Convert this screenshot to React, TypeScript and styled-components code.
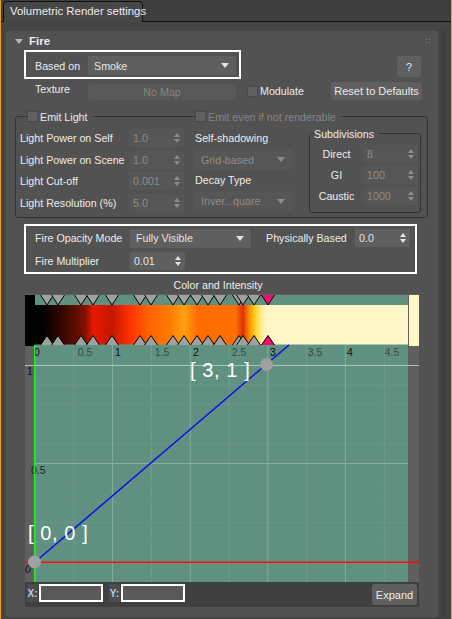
import styled, { createGlobalStyle } from 'styled-components';

const GlobalStyle = createGlobalStyle`
  html, body {
    margin: 0;
    padding: 0;
    background: #444444;
  }
  * {
    box-sizing: border-box;
  }
`;

const Page = styled.div`
  width: 452px;
  height: 619px;
  overflow: hidden;
  display: flex;
  flex-direction: column;
  background: #444444;
  border-left: 1px solid #e8a31c;
  border-right: 1px solid #e8a31c;
  font-family: "Liberation Sans", Arial, sans-serif;
  font-size: 10.7px;
  color: #ececec;
`;

const TabBar = styled.div`
  height: 22px;
  flex: none;
  padding: 1px 0 0 2px;
  display: flex;
  align-items: flex-end;
  border-bottom: 1px solid #111111;
  background: #3f3f3f;
`;

const Tab = styled.div`
  width: 140px;
  height: 21px;
  margin-bottom: -1px;
  padding: 3px 0 0 6px;
  background: #474747;
  border: 1px solid #111111;
  border-bottom: 0;
  border-radius: 4px 4px 0 0;
  font-size: 11.4px;
  white-space: nowrap;
`;

const Body = styled.div`
  flex: 1;
  display: flex;
  padding: 9px 5px 2px 5px;
  gap: 3px;
`;

const Rollout = styled.div`
  position: relative;
  width: 432px;
  height: 586px;
  background: #525252;
  border-radius: 2px;
  display: flex;
  flex-direction: column;
`;

const Scrollbar = styled.div`
  width: 5px;
  background: #3d3d3d;
`;

const RolloutHeader = styled.div`
  height: 19px;
  flex: none;
  display: flex;
  align-items: center;
  gap: 6px;
  padding: 1px 6px 0 9px;
  font-weight: 700;
  font-size: 11.5px;
`;

const Collapse = styled.span`
  width: 0;
  height: 0;
  border-left: 4px solid transparent;
  border-right: 4px solid transparent;
  border-top: 5px solid #b8b8b8;
`;

const Grip = styled.span`
  margin-left: auto;
  width: 7px;
  height: 7px;
  background-image: radial-gradient(#8a8a8a 0.7px, transparent 0.8px);
  background-size: 3px 3px;
`;

const TopRow = styled.div`
  height: 29px;
  flex: none;
  display: flex;
  align-items: flex-start;
  padding-left: 18px;
`;

const Highlight = styled.div`
  border: 2px solid #ffffff;
`;

const BasedOnBox = styled(Highlight)`
  width: 217px;
  height: 29px;
  display: flex;
  align-items: center;
  padding: 2px 3px 0 9px;
`;

const Label = styled.span`
  white-space: nowrap;
`;

const BasedOnLabel = styled(Label)`
  width: 53px;
  flex: none;
`;

const Dropdown = styled.div<{ $width: number; $height?: number; $disabled?: boolean }>`
  width: ${props => props.$width}px;
  height: ${props => props.$height ?? 19}px;
  flex: none;
  display: flex;
  align-items: center;
  justify-content: space-between;
  padding: 0 7px 0 6px;
  border-radius: 1px;
  background: ${props => (props.$disabled ? '#565656' : '#5f5f5f')};
  color: ${props => (props.$disabled ? '#8c8c8c' : '#e4e4e4')};
  white-space: nowrap;
`;

const Caret = styled.span<{ $disabled?: boolean }>`
  width: 0;
  height: 0;
  border-left: 4px solid transparent;
  border-right: 4px solid transparent;
  border-top: 5px solid ${props => (props.$disabled ? '#8c8c8c' : '#e4e4e4')};
`;

const HelpButton = styled.div`
  width: 24px;
  height: 21px;
  margin: 6px 0 0 156px;
  display: flex;
  align-items: center;
  justify-content: center;
  border-radius: 3px;
  background: #5f5f5f;
`;

const TextureRow = styled.div`
  height: 37px;
  flex: none;
  display: flex;
  align-items: flex-start;
  padding: 3px 0 0 29px;
`;

const TextureLabel = styled(Label)`
  width: 53px;
  flex: none;
  margin-top: 1px;
`;

const NoMap = styled.div`
  width: 148px;
  height: 16px;
  margin-top: 2px;
  flex: none;
  display: flex;
  align-items: center;
  justify-content: center;
  border-radius: 3px;
  background: #585858;
  color: #858585;
`;

const CheckRow = styled.div<{ $disabled?: boolean }>`
  display: flex;
  align-items: center;
  gap: 2px;
  white-space: nowrap;
  color: ${props => (props.$disabled ? '#858585' : '#ececec')};
`;

const Modulate = styled(CheckRow)`
  margin: 3px 0 0 11px;
  width: 84px;
  flex: none;
`;

const Check = styled.span`
  width: 11px;
  height: 11px;
  flex: none;
  background: #616161;
  border: 1px solid #4a4a4a;
`;

const ResetButton = styled.div`
  width: 91px;
  height: 18px;
  flex: none;
  display: flex;
  align-items: center;
  justify-content: center;
  border-radius: 3px;
  background: #5f5f5f;
  font-size: 11px;
  white-space: nowrap;
`;

const EmitGroup = styled.div`
  position: relative;
  width: 413px;
  height: 102px;
  flex: none;
  margin-left: 9px;
  padding: 10px 0 0 4px;
  display: flex;
  align-items: flex-start;
  border: 1px solid #333333;
  border-radius: 3px;
`;

const Legend = styled.div<{ $left: number }>`
  position: absolute;
  top: -7px;
  left: ${props => props.$left}px;
  padding: 0 5px 0 0;
  height: 13px;
  display: flex;
  align-items: center;
  background: #525252;
`;

const LightColumn = styled.div`
  width: 175px;
  flex: none;
  display: grid;
  grid-auto-rows: 21.7px;
`;

const LightRow = styled.div`
  display: flex;
  align-items: center;
  justify-content: space-between;
  padding-right: 11px;
`;

const Spinner = styled.div<{ $disabled?: boolean; $width?: number }>`
  width: ${props => props.$width ?? 55}px;
  height: 18px;
  flex: none;
  display: flex;
  align-items: center;
  justify-content: space-between;
  padding: 0 4px;
  border-radius: 1px;
  background: ${props => (props.$disabled ? '#565656' : '#5f5f5f')};
  color: ${props => (props.$disabled ? '#8c8c8c' : '#e4e4e4')};
`;

const Arrows = styled.span<{ $disabled?: boolean }>`
  display: flex;
  flex-direction: column;
  gap: 2px;
  &::before,
  &::after {
    content: '';
    width: 0;
    height: 0;
    border-left: 3px solid transparent;
    border-right: 3px solid transparent;
  }
  &::before {
    border-bottom: 4px solid ${props => (props.$disabled ? '#8c8c8c' : '#e4e4e4')};
  }
  &::after {
    border-top: 4px solid ${props => (props.$disabled ? '#8c8c8c' : '#e4e4e4')};
  }
`;

const ShadowColumn = styled.div`
  width: 114px;
  flex: none;
  display: flex;
  flex-direction: column;
`;

const ShadowLabel = styled(Label)`
  height: 15px;
  line-height: 15px;
  margin: 4px 0 3px;
`;

const DecayLabel = styled(ShadowLabel)`
  margin: 3px 0 3px;
`;

const SubGroup = styled.div`
  position: relative;
  width: 112px;
  height: 80px;
  flex: none;
  margin-top: 6px;
  padding: 9px 3px 0 0;
  border: 1px solid #333333;
  border-radius: 3px;
  display: grid;
  grid-auto-rows: 21px;
`;

const SubRow = styled.div`
  display: grid;
  grid-template-columns: 53px 55px;
  align-items: center;
  justify-items: center;
`;

const OpacityBox = styled(Highlight)`
  width: 393px;
  height: 50px;
  flex: none;
  margin: 6px 0 0 18px;
  padding: 3px 5px 0 9px;
  display: grid;
  grid-template-columns: 95px 121px 15px 89px 55px;
  grid-template-rows: 18px 18px;
  row-gap: 5px;
  align-items: center;
`;

const ChartTitle = styled.div`
  height: 20px;
  flex: none;
  padding: 5px 0 0 0;
  margin-left: -8px;
  text-align: center;
`;

const CurveWidget = styled.div`
  width: 394px;
  height: 313px;
  flex: none;
  margin-left: 19px;
  display: flex;
  flex-direction: column;
`;

const CurveBar = styled.div`
  height: 25px;
  flex: none;
  display: flex;
  align-items: flex-start;
  padding: 2px 2px 0 2px;
  background: #404040;
`;

const AxisTag = styled.span`
  width: 11px;
  height: 18px;
  margin-right: 1px;
  flex: none;
  display: flex;
  align-items: center;
  justify-content: center;
  background: #4c4c4c;
  font-size: 10px;
  font-weight: 700;
  color: #b4cce8;
`;

const AxisInput = styled.div`
  width: 64px;
  height: 18px;
  flex: none;
  background: #595959;
  border: 2px solid #ffffff;
`;

const AxisGap = styled.span`
  width: 6px;
  flex: none;
`;

const ExpandButton = styled.div`
  width: 45px;
  height: 21px;
  margin-left: auto;
  display: flex;
  align-items: center;
  justify-content: center;
  border-radius: 3px;
  background: #5f5f5f;
  font-size: 11px;
`;

const lightRows = [
  { label: 'Light Power on Self', value: '1.0' },
  { label: 'Light Power on Scene', value: '1.0' },
  { label: 'Light Cut-off', value: '0.001' },
  { label: 'Light Resolution (%)', value: '5.0' },
];

const subRows = [
  { label: 'Direct', value: '8' },
  { label: 'GI', value: '100' },
  { label: 'Caustic', value: '1000' },
];

const markers = [47, 58, 81, 93, 112, 140, 151, 173, 184, 197, 208, 220, 239, 243, 254];
const ticks = [
  { x: 37, label: '0', dark: true },
  { x: 85, label: '0.5' },
  { x: 118, label: '1', dark: true },
  { x: 162, label: '1.5' },
  { x: 196, label: '2', dark: true },
  { x: 239, label: '2.5' },
  { x: 273, label: '3', dark: true },
  { x: 315, label: '3.5' },
  { x: 350, label: '4', dark: true },
  { x: 392, label: '4.5' },
];

const stops: [number, string][] = [
  [43, '#000000'], [75, '#5a0c00'], [86, '#8a1000'], [93, '#e81800'], [112, '#c41800'],
  [130, '#ff3300'], [150, '#ff6400'], [170, '#ff7c00'], [184, '#ffa010'], [198, '#ff6c00'],
  [236, '#ff7000'], [243, '#dd3000'], [249, '#ff8a00'], [255, '#ffd020'], [262, '#fff0a0'],
  [268, '#fff8c6'],
];

// chart is drawn in page pixels, shifted by the widget origin (25, 294)
const OX = 25;
const OY = 294;
const chartFont = 'Liberation Sans, Arial, sans-serif';

const Marker = ({ x, fill }: { x: number; fill: string }) => {
  const cx = x - OX;
  return (
    <g>
      <polygon points={`${cx - 6.5},1 ${cx + 6.5},1 ${cx},11`} fill={fill} />
      <polyline points={`${cx - 6.5},1 ${cx},11 ${cx + 6.5},1`} fill="none" stroke="#000000" />
      <polygon points={`${cx - 6.5},51 ${cx + 6.5},51 ${cx},41.5`} fill={fill} />
      <polyline points={`${cx - 6.5},51 ${cx},41.5 ${cx + 6.5},51`} fill="none" stroke="#000000" />
    </g>
  );
};

const CurveChart = () => {
  const px = (x: number) => x - OX;
  const py = (y: number) => y - OY;
  const vertical = Array.from({ length: 10 }, (_, i) => ({ x: 35 + 38.8 * i, major: i % 2 === 0 }));
  const horizontal = Array.from({ length: 12 }, (_, i) => 345 + 19.7 * i);

  return (
    <svg width="394" height="288" viewBox="0 0 394 288" style={{ display: 'block', flex: 'none' }}>
      <defs>
        <linearGradient id="fire" gradientUnits="userSpaceOnUse" x1={px(35)} x2={px(408)} y1="0" y2="0">
          {stops.map(([x, c]) => (
            <stop key={x} offset={(x - 35) / 373} stopColor={c} />
          ))}
        </linearGradient>
      </defs>
      <rect x="0" y="0" width="394" height="288" fill="#5f5f5f" />
      <rect x={px(35)} y="1" width="373" height="287" fill="#5f9080" />
      <rect x="0" y="1" width="10" height="51" fill="#000000" />
      <rect x={px(409)} y="1" width="10" height="51" fill="#fff8c6" />
      <rect x={px(35)} y={py(305)} width="373" height="40" fill="url(#fire)" />

      {horizontal.map(y => (
        <line key={y} x1={px(35)} x2={px(408)} y1={py(y)} y2={py(y)} stroke="#66968a" strokeWidth="1" />
      ))}
      {vertical.map(v => (
        <line
          key={v.x}
          x1={px(v.x)}
          x2={px(v.x)}
          y1={py(345)}
          y2={py(582)}
          stroke={v.major ? '#86ae9f' : '#6e9c8c'}
          strokeWidth="1"
        />
      ))}
      <line x1="0" x2="394" y1={py(365.5)} y2={py(365.5)} stroke="#a8c4ba" strokeWidth="1" />
      <line x1={px(35)} x2={px(408)} y1={py(463.5)} y2={py(463.5)} stroke="#86ae9f" strokeWidth="1" />

      {markers.map(x => (
        <Marker key={x} x={x} fill="#a0a0a0" />
      ))}
      <Marker x={268} fill="#f01070" />

      {ticks.map(t => (
        <text
          key={t.x}
          x={px(t.x)}
          y={py(356)}
          textAnchor="middle"
          fontFamily={chartFont}
          fontSize="10.5"
          fill={t.dark ? '#101010' : '#3c4a46'}
        >
          {t.label}
        </text>
      ))}
      <text x={px(30)} y={py(375)} textAnchor="middle" fontFamily={chartFont} fontSize="10.5" fill="#101010">1</text>
      <text x={px(31)} y={py(474)} fontFamily={chartFont} fontSize="10.5" fill="#202020">0.5</text>
      <text x={px(28)} y={py(573)} textAnchor="middle" fontFamily={chartFont} fontStyle="italic" fontSize="10.5" fill="#101010">0</text>

      <line x1={px(34.5)} y1={py(345)} x2={px(34.5)} y2={py(582)} stroke="#1cf01c" strokeWidth="1.2" />
      <line x1="0" x2="394" y1={py(562.3)} y2={py(562.3)} stroke="#ff0a0a" strokeWidth="1.5" />
      <line x1={px(35)} y1={py(562)} x2={px(289)} y2={py(345)} stroke="#0808f0" strokeWidth="1.4" />
      <circle cx={px(34.5)} cy={py(562)} r="6.5" fill="#a0a0a0" />
      <circle cx={px(266.5)} cy={py(364.5)} r="6.5" fill="#a0a0a0" />

      <text x={px(190)} y={py(377)} fontFamily={chartFont} fontSize="20" letterSpacing="0.6" fill="#ffffff">[ 3, 1 ]</text>
      <text x={px(28)} y={py(539.5)} fontFamily={chartFont} fontSize="20" letterSpacing="0.6" fill="#ffffff">[ 0, 0 ]</text>
    </svg>
  );
};

export default function App() {
  return (
    <Page>
      <GlobalStyle />
      <TabBar>
        <Tab>Volumetric Render settings</Tab>
      </TabBar>
      <Body>
        <Rollout>
          <RolloutHeader>
            <Collapse />
            Fire
            <Grip />
          </RolloutHeader>

          <TopRow>
            <BasedOnBox>
              <BasedOnLabel>Based on</BasedOnLabel>
              <Dropdown $width={148}>
                Smoke
                <Caret />
              </Dropdown>
            </BasedOnBox>
            <HelpButton>?</HelpButton>
          </TopRow>

          <TextureRow>
            <TextureLabel>Texture</TextureLabel>
            <NoMap>No Map</NoMap>
            <Modulate>
              <Check />
              Modulate
            </Modulate>
            <ResetButton>Reset to Defaults</ResetButton>
          </TextureRow>

          <EmitGroup>
            <Legend $left={11}>
              <CheckRow>
                <Check />
                Emit Light
              </CheckRow>
            </Legend>
            <Legend $left={179}>
              <CheckRow $disabled>
                <Check />
                Emit even if not renderable
              </CheckRow>
            </Legend>

            <LightColumn>
              {lightRows.map(row => (
                <LightRow key={row.label}>
                  <Label>{row.label}</Label>
                  <Spinner $disabled>
                    {row.value}
                    <Arrows $disabled />
                  </Spinner>
                </LightRow>
              ))}
            </LightColumn>

            <ShadowColumn>
              <ShadowLabel>Self-shadowing</ShadowLabel>
              <Dropdown $width={97} $height={21} $disabled>
                Grid-based
                <Caret $disabled />
              </Dropdown>
              <DecayLabel>Decay Type</DecayLabel>
              <Dropdown $width={97} $height={20} $disabled>
                Inver...quare
                <Caret $disabled />
              </Dropdown>
            </ShadowColumn>

            <SubGroup>
              <Legend $left={4}>
                <Label>Subdivisions</Label>
              </Legend>
              {subRows.map(row => (
                <SubRow key={row.label}>
                  <Label>{row.label}</Label>
                  <Spinner $disabled>
                    {row.value}
                    <Arrows $disabled />
                  </Spinner>
                </SubRow>
              ))}
            </SubGroup>
          </EmitGroup>

          <OpacityBox>
            <Label>Fire Opacity Mode</Label>
            <Dropdown $width={121}>
              Fully Visible
              <Caret />
            </Dropdown>
            <span />
            <Label>Physically Based</Label>
            <Spinner>
              0.0
              <Arrows />
            </Spinner>
            <Label>Fire Multiplier</Label>
            <Spinner>
              0.01
              <Arrows />
            </Spinner>
          </OpacityBox>

          <ChartTitle>Color and Intensity</ChartTitle>

          <CurveWidget>
            <CurveChart />
            <CurveBar>
              <AxisTag>X:</AxisTag>
              <AxisInput />
              <AxisGap />
              <AxisTag>Y:</AxisTag>
              <AxisInput />
              <ExpandButton>Expand</ExpandButton>
            </CurveBar>
          </CurveWidget>
        </Rollout>
        <Scrollbar />
      </Body>
    </Page>
  );
}
